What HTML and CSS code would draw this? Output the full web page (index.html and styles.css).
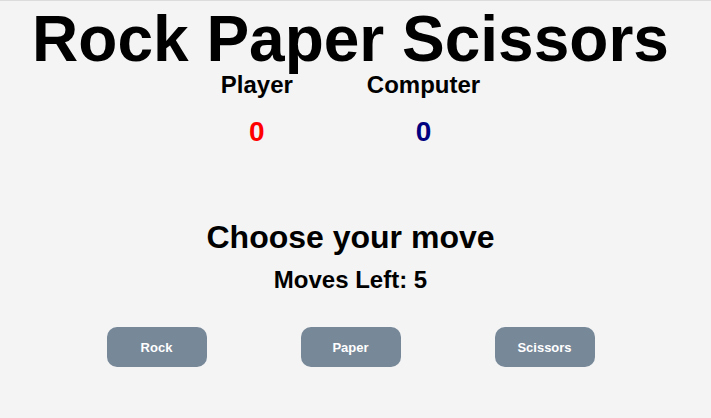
FILE: index.html
```html
<!DOCTYPE html>
<html lang="en">
<head>
<meta charset="utf-8">
<title>Rock Paper Scissors</title>
<link rel="stylesheet" href="styles.css">
</head>
<body>
<main class="game">
  <h1 class="title">Rock Paper Scissors</h1>
  <section class="scoreboard">
    <div class="score-col">
      <div class="label">Player</div>
      <div class="score score-player">0</div>
    </div>
    <div class="score-col">
      <div class="label">Computer</div>
      <div class="score score-computer">0</div>
    </div>
  </section>
  <h2 class="prompt">Choose your move</h2>
  <h3 class="moves">Moves Left: 5</h3>
  <div class="choices">
    <button class="choice">Rock</button>
    <button class="choice">Paper</button>
    <button class="choice">Scissors</button>
  </div>
</main>
</body>
</html>
```

FILE: styles.css
```css
body {
  margin: 0;
  background: #f4f4f4;
  border-top: 1px solid #dcdcdc;
  font-family: "Liberation Sans", Arial, sans-serif;
  color: #000;
}

.game {
  width: 701px;
  display: flex;
  flex-direction: column;
  align-items: center;
  padding-top: 6px;
}

.title {
  margin: 0;
  font-size: 64px;
  line-height: 64px;
  font-weight: bold;
}

.scoreboard {
  display: flex;
  gap: 74px;
  margin-top: 2px;
}

.score-col {
  display: flex;
  flex-direction: column;
  align-items: center;
}

.label {
  font-size: 24px;
  line-height: 24px;
  font-weight: bold;
}

.score {
  margin-top: 21px;
  font-size: 28px;
  line-height: 28px;
  font-weight: bold;
}

.score-player {
  color: #ff0000;
}

.score-computer {
  color: #000080;
}

.prompt {
  margin: 75px 0 0;
  font-size: 32px;
  line-height: 32px;
  font-weight: bold;
}

.moves {
  margin: 15px 0 0;
  font-size: 24px;
  line-height: 24px;
  font-weight: bold;
}

.choices {
  display: flex;
  gap: 94px;
  margin-top: 35px;
}

.choice {
  width: 100px;
  height: 40px;
  padding: 0;
  border: none;
  border-radius: 10px;
  background: #778899;
  color: #fff;
  font-family: "Liberation Sans", Arial, sans-serif;
  font-size: 13px;
  font-weight: bold;
}
```
